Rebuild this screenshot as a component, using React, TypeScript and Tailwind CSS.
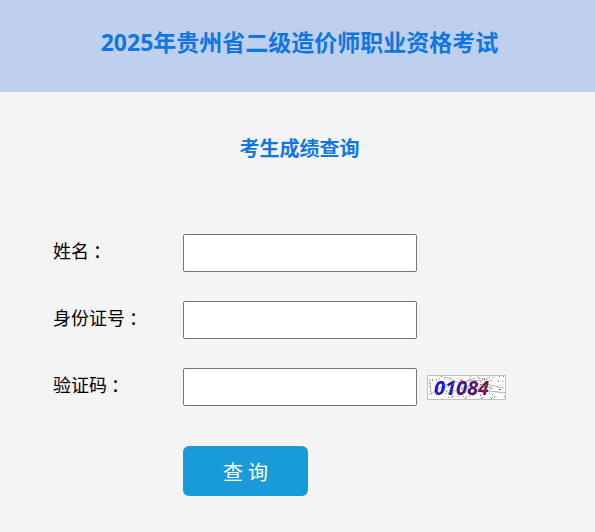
import { useState } from 'react';
import type { FormEvent, ReactNode } from 'react';

type FieldProps = {
  id: string;
  label: string;
  value: string;
  onChange: (value: string) => void;
  children?: ReactNode;
};

function Field({ id, label, value, onChange, children }: FieldProps) {
  return (
    <div className="flex items-center">
      <label htmlFor={id} className="w-[130px] shrink-0 pb-1 text-lg leading-6 text-black">
        {label}
        <span className="ml-1">：</span>
      </label>
      <input
        id={id}
        type="text"
        value={value}
        onChange={(e) => onChange(e.target.value)}
        className="h-[38px] w-full max-w-[234px] rounded-[2px] border border-[#767676] bg-white px-2 text-lg outline-none"
      />
      {children}
    </div>
  );
}

const lines = [
  'M2 20 L14 12 L27 22',
  'M3 4 L4 20',
  'M18 2 L33 8 L48 3',
  'M24 20 L39 6 L58 5',
  'M42 21 L55 9 L66 14',
  'M58 9 L77 13',
  'M34 3 L46 21',
  'M62 16 L77 18',
];

const colors = ['#c040d0', '#3fae4a', '#333333', '#d0504a', '#4a5ae0', '#8a8a8a', '#d8a860'];

// Small fixed-seed generator so the noise is the same on every render
function makeDots(count: number) {
  let seed = 4217;
  const next = () => {
    seed = (seed * 16807) % 2147483647;
    return seed / 2147483647;
  };
  return Array.from({ length: count }, (_, i) => ({
    x: 1 + Math.floor(next() * 77),
    y: 1 + Math.floor(next() * 23),
    color: colors[i % colors.length],
  }));
}

const dots = makeDots(120);

function Captcha() {
  return (
    <button type="button" aria-label="验证码" className="ml-2.5 shrink-0 cursor-pointer">
      <svg width="79" height="25" viewBox="0 0 79 25" className="block overflow-visible">
        <defs>
          <linearGradient id="captcha-ink" gradientUnits="userSpaceOnUse" x1="7" y1="0" x2="63" y2="0">
            <stop offset="0" stopColor="#1212e0" />
            <stop offset="0.5" stopColor="#42128f" />
            <stop offset="1" stopColor="#781038" />
          </linearGradient>
        </defs>
        <rect x="0.5" y="0.5" width="78" height="24" fill="#ffffff" stroke="#c0c0c0" />
        <g fill="none" stroke="#b4b4b4" strokeWidth="1">
          {lines.map((d) => (
            <path key={d} d={d} />
          ))}
        </g>
        <text
          x="7"
          y="20"
          fontSize="20"
          fontWeight="bold"
          fontStyle="italic"
          fontFamily="Open Sans, Noto Sans, sans-serif"
          fill="url(#captcha-ink)"
        >
          01084
        </text>
        {dots.map((dot, i) => (
          <rect key={i} x={dot.x} y={dot.y} width="1" height="1" fill={dot.color} opacity="0.75" />
        ))}
      </svg>
    </button>
  );
}

export default function App() {
  const [name, setName] = useState('');
  const [idNumber, setIdNumber] = useState('');
  const [code, setCode] = useState('');

  const handleSubmit = (e: FormEvent) => {
    e.preventDefault();
  };

  return (
    <div className="min-h-screen bg-[#f4f4f4] font-['Noto_Sans','Noto_Sans_CJK_SC',sans-serif]">
      <header className="bg-[#bfd0ee] pt-6 pb-8 pl-1 text-center">
        <h1 className="text-[23px] leading-9 font-bold text-[#1076e0]">
          2025年贵州省二级造价师职业资格考试
        </h1>
      </header>

      <main className="pt-[41px] pb-9">
        <h2 className="pl-1 text-center text-xl leading-8 font-bold text-[#1076e0]">考生成绩查询</h2>

        <form onSubmit={handleSubmit} className="mt-[69px] flex flex-col gap-[29px] pl-[53px] pr-4">
          <Field id="name" label="姓名" value={name} onChange={setName} />
          <Field id="id-number" label="身份证号" value={idNumber} onChange={setIdNumber} />
          <Field id="code" label="验证码" value={code} onChange={setCode}>
            <Captcha />
          </Field>
          <div className="pt-[11px] pl-[130px]">
            <button
              type="submit"
              className="block h-[50px] w-[125px] cursor-pointer rounded-md bg-[#189bd7] pt-1 text-xl text-white"
            >
              查 询
            </button>
          </div>
        </form>
      </main>
    </div>
  );
}
